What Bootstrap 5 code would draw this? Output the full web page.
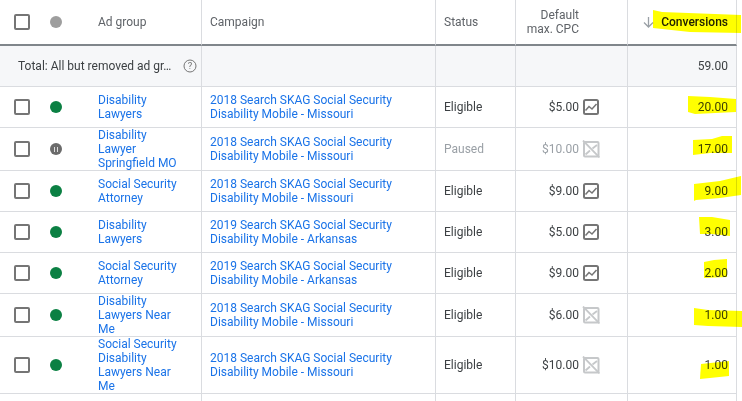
<!doctype html>
<html lang="en">
<head>
<meta charset="utf-8">
<title>Ad groups</title>
<link href="https://cdn.jsdelivr.net/npm/bootstrap@5.3.0/dist/css/bootstrap.min.css" rel="stylesheet">
<style>
html,body{margin:0;background:#fff;overflow:hidden}
body{font-family:Roboto,"Liberation Sans",sans-serif;font-size:12px;line-height:14px;color:#3c4043}
.sheet{position:relative;width:742px;height:401px;overflow:hidden}
.grid-tbl{width:737px;table-layout:fixed;border-collapse:separate;border-spacing:0;margin:0;font-size:12px;line-height:14px}
.grid-tbl th,.grid-tbl td{padding:0;vertical-align:middle;border-bottom:1px solid #dadce0;border-right:1px solid #dadce0;font-weight:400;color:#3c4043;background:transparent}
.grid-tbl .nob{border-right:0}
.grid-tbl thead th{border-bottom:2px solid #80868b;color:#5f6368;height:46px}
.grid-tbl .totals td{background:#f6f7f9;height:41px}
.h41 td{height:41px}.h43 td{height:43px}.h57 td{height:57px}
.grid-tbl .tail td{height:7px;border-bottom:0}
.pl-adg{padding-left:10px!important;padding-right:4px!important}
.pl-cell{padding-left:8px!important;padding-right:4px!important}
.num{text-align:right;padding-right:8px!important}
.grid-tbl .off{color:#9aa0a6}
.grid-tbl a{color:#1a73e8;text-decoration:none}
.tick{display:block;width:16px;height:16px;border:2px solid #757575;border-radius:2px;margin-left:14px}
.dot{display:block;width:12px;height:12px;border-radius:50%;margin-left:10px;background:#0b8043}
.dot.grey{background:#9e9e9e}
.dot.paused{background:#6b6b6b;position:relative}
.dot.paused::after{content:"";position:absolute;left:4px;top:3.5px;width:4px;height:5px;border-left:1.5px solid #ddd;border-right:1.5px solid #ddd}
.cpc{display:flex;justify-content:flex-end;align-items:center;gap:4px;margin-right:28px}
.cpc svg{flex:none}
.cpc .ico-off{margin:0 -1px}
.grid-tbl th.cpc-head{padding-right:48px}
.total-line{display:flex;align-items:center;justify-content:space-between;padding:0 4px 0 18px}
.marker{position:absolute;left:0;top:0;mix-blend-mode:multiply;pointer-events:none}
.conv-head{display:flex;justify-content:flex-end;align-items:center;gap:7px;font-weight:500;color:#202124}
</style>
</head>
<body>
<svg width="0" height="0" class="position-absolute">
<defs>
<symbol id="bid-on" viewBox="0 0 16 16"><rect x="1" y="1" width="14" height="14" rx="1.5" fill="none" stroke="#757575" stroke-width="2"/><path d="M2.500 11.500 L6 7.500 L9 10 L13.500 5" fill="none" stroke="#757575" stroke-width="1.500"/></symbol>
<symbol id="bid-off" viewBox="0 0 18 18"><rect x="2" y="2" width="14.500" height="14.500" rx="1" fill="none" stroke="#c6c8ca" stroke-width="2"/><path d="M1 0.500 L17.500 17.500 M3.500 14.500 L8 10.500 M10.500 8.500 L15 5" fill="none" stroke="#c6c8ca" stroke-width="1.800"/></symbol>
</defs>
</svg>
<div class="sheet">
<table class="table grid-tbl">
<colgroup><col style="width:40px"><col style="width:48px"><col style="width:114px"><col style="width:234px"><col style="width:80px"><col style="width:112px"><col style="width:109px"></colgroup>
<thead>
<tr>
<th class="nob"><span class="tick"></span></th>
<th class="nob"><span class="dot grey"></span></th>
<th class="pl-adg">Ad group</th>
<th class="pl-cell">Campaign</th>
<th class="pl-cell">Status</th>
<th class="text-end cpc-head">Default<br>max. CPC</th>
<th class="num"><div class="conv-head"><svg width="11" height="12" viewBox="0 0 11 12"><path d="M5.500 1V10.500M1 6.500L5.500 11L10 6.500" fill="none" stroke="#9aa0a6" stroke-width="1.300"/></svg><span>Conversions</span></div></th>
</tr>
</thead>
<tbody>
<tr class="totals">
<td colspan="3"><div class="total-line"><span>Total: All but removed ad gr…</span><svg width="14" height="14" viewBox="0 0 14 14"><circle cx="7" cy="7" r="6" fill="none" stroke="#757575" stroke-width="1"/><text x="7" y="10.300" text-anchor="middle" font-size="9.500" font-family="Roboto" fill="#757575">?</text></svg></div></td>
<td></td><td></td><td></td>
<td class="num">59.00</td>
</tr>
<tr class="h41"><td class="nob"><span class="tick"></span></td><td class="nob"><span class="dot"></span></td><td class="pl-adg"><a href="#">Disability<br>Lawyers</a></td><td class="pl-cell"><a href="#">2018 Search SKAG Social Security<br>Disability Mobile - Missouri</a></td><td class="pl-cell">Eligible</td><td><div class="cpc"><span>$5.00</span><svg width="16" height="16"><use href="#bid-on"/></svg></div></td><td class="num">20.00</td></tr>
<tr class="h43"><td class="nob"><span class="tick"></span></td><td class="nob"><span class="dot paused"></span></td><td class="pl-adg"><a href="#">Disability<br>Lawyer<br>Springfield MO</a></td><td class="pl-cell"><a href="#">2018 Search SKAG Social Security<br>Disability Mobile - Missouri</a></td><td class="pl-cell off">Paused</td><td class="off"><div class="cpc"><span>$10.00</span><svg class="ico-off" width="18" height="18"><use href="#bid-off"/></svg></div></td><td class="num">17.00</td></tr>
<tr class="h41"><td class="nob"><span class="tick"></span></td><td class="nob"><span class="dot"></span></td><td class="pl-adg"><a href="#">Social Security<br>Attorney</a></td><td class="pl-cell"><a href="#">2018 Search SKAG Social Security<br>Disability Mobile - Missouri</a></td><td class="pl-cell">Eligible</td><td><div class="cpc"><span>$9.00</span><svg width="16" height="16"><use href="#bid-on"/></svg></div></td><td class="num">9.00</td></tr>
<tr class="h41"><td class="nob"><span class="tick"></span></td><td class="nob"><span class="dot"></span></td><td class="pl-adg"><a href="#">Disability<br>Lawyers</a></td><td class="pl-cell"><a href="#">2019 Search SKAG Social Security<br>Disability Mobile - Arkansas</a></td><td class="pl-cell">Eligible</td><td><div class="cpc"><span>$5.00</span><svg width="16" height="16"><use href="#bid-on"/></svg></div></td><td class="num">3.00</td></tr>
<tr class="h41"><td class="nob"><span class="tick"></span></td><td class="nob"><span class="dot"></span></td><td class="pl-adg"><a href="#">Social Security<br>Attorney</a></td><td class="pl-cell"><a href="#">2019 Search SKAG Social Security<br>Disability Mobile - Arkansas</a></td><td class="pl-cell">Eligible</td><td><div class="cpc"><span>$9.00</span><svg width="16" height="16"><use href="#bid-on"/></svg></div></td><td class="num">2.00</td></tr>
<tr class="h43"><td class="nob"><span class="tick"></span></td><td class="nob"><span class="dot"></span></td><td class="pl-adg"><a href="#">Disability<br>Lawyers Near<br>Me</a></td><td class="pl-cell"><a href="#">2018 Search SKAG Social Security<br>Disability Mobile - Missouri</a></td><td class="pl-cell">Eligible</td><td><div class="cpc"><span>$6.00</span><svg class="ico-off" width="18" height="18"><use href="#bid-off"/></svg></div></td><td class="num">1.00</td></tr>
<tr class="h57"><td class="nob"><span class="tick"></span></td><td class="nob"><span class="dot"></span></td><td class="pl-adg"><a href="#">Social Security<br>Disability<br>Lawyers Near<br>Me</a></td><td class="pl-cell"><a href="#">2018 Search SKAG Social Security<br>Disability Mobile - Missouri</a></td><td class="pl-cell">Eligible</td><td><div class="cpc"><span>$10.00</span><svg class="ico-off" width="18" height="18"><use href="#bid-off"/></svg></div></td><td class="num">1.00</td></tr>
<tr class="tail"><td class="nob"></td><td class="nob"></td><td></td><td></td><td></td><td></td><td></td></tr>
</tbody>
</table>
<svg class="marker" width="742" height="401" viewBox="0 0 742 401">
<g fill="#ffff00">
<path d="M653 10L662 12L741 15L741 33L690 32L653 28Z"/>
<path d="M688 96L710 97L736 99L736 112L695 114L688 112Z"/>
<path d="M693 140L712 139L722 136L732 136L732 153L710 153L693 155Z"/>
<path d="M694 184L720 181L741 176L741 195L720 198L696 200L694 201Z"/>
<path d="M699 217L712 217L730 220L730 236L712 234L700 234Z"/>
<path d="M704 262L714 260L727 259L727 277L704 278Z"/>
<path d="M694 308L708 310L742 311L742 327L708 326L694 325Z"/>
<path d="M701 364L729 361L729 376L710 378L700 379Z"/>
</g>
</svg>
</div>
</body>
</html>
